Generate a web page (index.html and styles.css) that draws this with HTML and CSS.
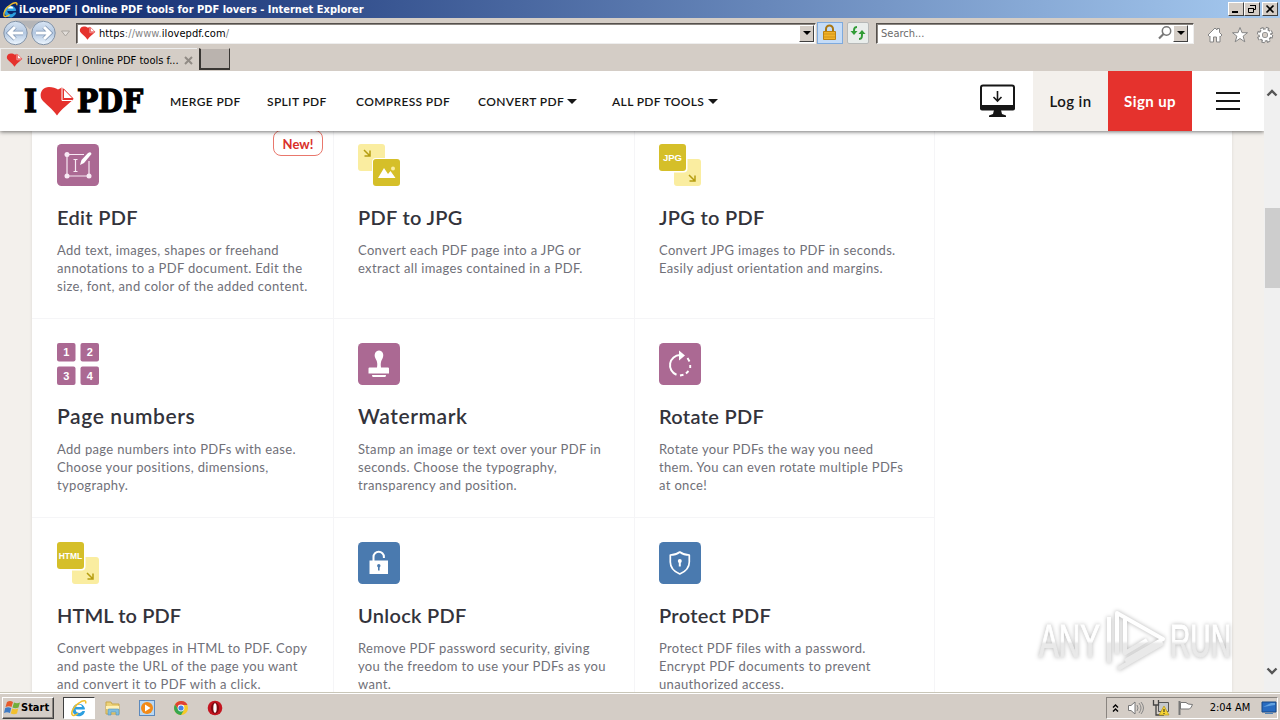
FILE: index.html
```html
<!DOCTYPE html>
<html lang="en">

<head>
  <meta charset="UTF-8">
  <meta name="viewport" content="width=device-width, initial-scale=1.0">
  <title>iLovePDF | Online PDF tools for PDF lovers</title>
  <link rel="stylesheet" href="styles.css">
</head>

<body>
  <!-- Shared shapes -->
  <svg class="defs" width="0" height="0">
    <defs>
      <symbol id="heart" viewBox="0 0 34 30">
        <path fill="#e5322d" d="M17 29.500C13 23 5 18 1.500 13C-1 8 2 1 9 1c4 0 6.500 1 9 2.500l4-2L33.500 13C29 18 21 23 17 29.500z" />
        <path fill="#fff" stroke="#e5322d" stroke-width="1" d="M23.500 2.800v9.700h9.500z" />
        <path fill="none" stroke="#fff" d="M22 2v12.500h10" />
      </symbol>
      <symbol id="ie" viewBox="0 0 18 18">
        <path d="M14.500 10.500H5.500a3.800 3.800 0 0 0 7 1.600h2.500A6.300 6.300 0 1 1 15 10z" fill="#2d9fe0" />
        <path d="M6 8h6.200a3.200 3.200 0 0 0-6.200 0z" fill="#fff" />
        <path d="M15.500 4.500C17 1 13 1 9 4 4 7 1 13 2 15.500c.8 2 4 .5 6-1" fill="none" stroke="#f1be2c" stroke-width="1.500" />
      </symbol>
      <symbol id="arrow" viewBox="0 0 8 8">
        <path d="M1 1l5.500 5.500M7 1.500V7H1.500" fill="none" stroke="#b59d10" stroke-width="1.500" />
      </symbol>
    </defs>
  </svg>

  <!-- Browser window -->
  <div class="titlebar">
    <svg width="17" height="17"><use href="#ie" /></svg>
    <span class="window-title">iLovePDF | Online PDF tools for PDF lovers - Internet Explorer</span>
    <div class="window-buttons">
      <span class="win-btn"><svg width="12" height="10"><path d="M2 8h6" stroke="#000" stroke-width="2" /></svg></span>
      <span class="win-btn"><svg width="12" height="10"><path d="M4.500 1.500h5v4h-2M4 1.500h6M2.500 4.500h5v4h-5zM2 4.500h6" fill="none" stroke="#000" /></svg></span>
      <span class="win-btn close-btn"><svg width="12" height="10"><path d="M2.500 1.500l7 7M9.500 1.500l-7 7" stroke="#000" stroke-width="1.700" /></svg></span>
    </div>
  </div>

  <div class="toolbar">
    <svg class="nav-buttons" width="76" height="30" viewBox="0 0 76 30">
      <defs>
        <linearGradient id="glass" x1="0" y1="0" x2="0" y2="1">
          <stop offset="0" stop-color="#d8e5f4" />
          <stop offset=".5" stop-color="#b3c7e0" />
          <stop offset="1" stop-color="#eef7ff" />
        </linearGradient>
      </defs>
      <path d="M15 2.500h29q-8 3-14 9-6-6-15-9z" fill="#b5b5b7" />
      <g fill="url(#glass)" stroke="#8292a6">
        <circle cx="15.500" cy="15" r="11.700" />
        <circle cx="43.500" cy="15" r="11.700" />
      </g>
      <g fill="none" stroke="#7d94b2" stroke-width="4.500">
        <path d="M23 15H10M15 9l-6 6 6 6M36 15h13M44 9l6 6-6 6" />
      </g>
      <g fill="none" stroke="#fff" stroke-width="3">
        <path d="M23 15H10M15 9l-6 6 6 6M36 15h13M44 9l6 6-6 6" />
      </g>
      <path d="M61.500 13h8l-4 5z" fill="#e2deda" stroke="#aaa59f" />
    </svg>
    <div class="field address">
      <svg width="17" height="14"><use href="#heart" /></svg>
      <span class="url"><span>https</span><i>://www.</i><span>ilovepdf.com</span><i>/</i></span>
      <span class="drop-btn"></span>
    </div>
    <span class="tool-btn lock">
      <svg width="16" height="18" viewBox="0 0 16 18">
        <path d="M4 8V5a3.500 3.500 0 0 1 7 0v3" fill="none" stroke="#a97713" stroke-width="2" />
        <path d="M1.500 7.500h12v8h-12z" fill="#f2b32a" stroke="#bc8213" />
        <path d="M2 10h11M2 13h11" stroke="#cf941c" />
      </svg>
    </span>
    <span class="tool-btn refresh">
      <svg width="16" height="14" viewBox="0 0 16 14">
        <path d="M7 1C4 1 4 3 4 6M9 13c3 0 3-2 3-5" fill="none" stroke="#319c36" stroke-width="2" />
        <path d="M.5 5h7L4 9zM8.500 8h7L12 4z" fill="#319c36" />
      </svg>
    </span>
    <div class="field search">
      <span>Search...</span>
      <svg width="16" height="16" viewBox="0 0 16 16">
        <circle cx="9.500" cy="6" r="4.200" fill="none" stroke="#777" stroke-width="1.500" />
        <path d="M6.500 9L2 13.500" stroke="#777" stroke-width="2.200" />
      </svg>
      <span class="drop-btn"></span>
    </div>
    <div class="corner-icons">
      <svg width="18" height="18" viewBox="0 0 18 18"><path d="M2 9l7-7 2 2V2.500h2.500V6.500L16 9l-1.500 1.500-.5-.5v6h-3.500v-5h-3v5H4v-6l-.5.500z" fill="#fff" stroke="#858585" /></svg>
      <svg width="18" height="18" viewBox="0 0 18 18"><path d="M9 1.500l2 5.200h5.500l-4.400 3.500 1.700 5.600L9 12.500l-4.800 3.300 1.700-5.600L1.500 6.700H7z" fill="#fff" stroke="#858585" /></svg>
      <svg width="18" height="18" viewBox="0 0 18 18">
        <circle cx="9" cy="9" r="6.300" fill="none" stroke="#858585" stroke-width="3.800" stroke-dasharray="2.900 2.050" />
        <circle cx="9" cy="9" r="4.500" fill="none" stroke="#858585" stroke-width="4.500" />
        <circle cx="9" cy="9" r="6" fill="none" stroke="#fff" stroke-width="2.200" stroke-dasharray="2 2.710" />
        <circle cx="9" cy="9" r="4.200" fill="none" stroke="#fff" stroke-width="2.400" />
      </svg>
    </div>
  </div>

  <div class="tabs">
    <div class="tab">
      <svg width="17" height="14"><use href="#heart" /></svg>
      <span>iLovePDF | Online PDF tools f...</span>
      <svg class="tab-close" width="9" height="9"><path d="M1 1l7 7M8 1L1 8" stroke="#918b85" stroke-width="2" /></svg>
    </div>
    <div class="new-tab"></div>
  </div>

  <!-- Page -->
  <div class="viewport">
    <div class="page">
      <header>
        <div class="logo">
          <svg width="122" height="32" viewBox="0 0 122 32">
            <text class="logo-text" x="0" y="27" textLength="13" lengthAdjust="spacingAndGlyphs">I</text>
            <use href="#heart" x="16" y="1" width="34" height="30" />
            <text class="logo-text" x="53" y="27" textLength="66" lengthAdjust="spacingAndGlyphs">PDF</text>
          </svg>
        </div>
        <nav>
          <a class="merge">MERGE PDF</a>
          <a class="split">SPLIT PDF</a>
          <a class="compress">COMPRESS PDF</a>
          <a class="convert">CONVERT PDF <b class="caret"></b></a>
          <a class="all">ALL PDF TOOLS <b class="caret"></b></a>
        </nav>
        <svg class="desktop" width="36" height="34" viewBox="0 0 36 34">
          <rect x="1" y="1.500" width="33" height="23.500" rx="2" fill="#fff" stroke="#161616" stroke-width="2" />
          <path d="M0 21h35v3.500q0 2-2 2H2q-2 0-2-2z" fill="#161616" />
          <path d="M14 26h7l1 4 4 1.500V33H9v-1.500l4-1.500z" fill="#161616" />
          <path d="M17.500 7v10M13.500 13l4 4 4-4" fill="none" stroke="#161616" stroke-width="1.600" />
        </svg>
        <a class="login">Log in</a>
        <a class="signup">Sign up</a>
        <div class="burger"><i></i><i></i><i></i></div>
      </header>

      <main>
        <div class="tools">
          <div class="tool">
            <span class="badge">New!</span>
            <svg class="icon" viewBox="0 0 42 42">
              <rect width="42" height="42" rx="4.500" fill="#ab6993" />
              <g stroke="#f8e9f4" stroke-width="1.200" fill="none">
                <path d="M10 10.500h17M10 10.500v21.500h22V17M18.500 16v11M16.500 15.500h4M16.500 27.500h4" />
              </g>
              <g fill="#f8e9f4"><circle cx="10" cy="10.500" r="2.500" /><circle cx="10" cy="32" r="2.500" /><circle cx="32" cy="32" r="2.500" /></g>
              <path d="M23 21l1.500-5L31 9q3-2 3.500 1L27 19z" fill="#fff" />
            </svg>
            <h3>Edit PDF</h3>
            <p>Add text, images, shapes or freehand<br>annotations to a PDF document. Edit the<br>size, font, and color of the added content.</p>
          </div>
          <div class="tool">
            <svg class="icon" viewBox="0 0 42 42">
              <rect width="27" height="27" rx="3" fill="#faeda0" />
              <use href="#arrow" x="5" y="5" width="8" height="8" />
              <rect x="14" y="14" width="29" height="29" rx="4" fill="#fff" />
              <rect x="15" y="15" width="27" height="27" rx="3" fill="#d5bf29" />
              <path d="M20 34l6-10 4 6 2.500-3 5 7z" fill="#fff" /><circle cx="35" cy="24.500" r="2" fill="#faeda0" />
            </svg>
            <h3>PDF to JPG</h3>
            <p>Convert each PDF page into a JPG or<br>extract all images contained in a PDF.</p>
          </div>
          <div class="tool">
            <svg class="icon" viewBox="0 0 42 42">
              <rect x="15" y="15" width="27" height="27" rx="3" fill="#faeda0" />
              <use href="#arrow" x="29" y="30" width="8" height="8" />
              <rect width="28.500" height="28.500" rx="4" fill="#fff" />
              <rect width="27" height="27" rx="3" fill="#d5bf29" />
              <text class="icon-text" x="13.500" y="17" textLength="19" lengthAdjust="spacingAndGlyphs">JPG</text>
            </svg>
            <h3>JPG to PDF</h3>
            <p>Convert JPG images to PDF in seconds.<br>Easily adjust orientation and margins.</p>
          </div>

          <div class="tool">
            <svg class="icon" viewBox="0 0 42 42">
              <g fill="#ab6993">
                <rect width="18.500" height="18.500" rx="2" /><rect x="23.500" width="18.500" height="18.500" rx="2" />
                <rect y="23.500" width="18.500" height="18.500" rx="2" /><rect x="23.500" y="23.500" width="18.500" height="18.500" rx="2" />
              </g>
              <g class="icon-number">
                <text x="9.200" y="13.200">1</text><text x="32.800" y="13.200">2</text>
                <text x="9.200" y="37">3</text><text x="32.800" y="37">4</text>
              </g>
            </svg>
            <h3 class="wide">Page numbers</h3>
            <p>Add page numbers into PDFs with ease.<br>Choose your positions, dimensions,<br>typography.</p>
          </div>
          <div class="tool">
            <svg class="icon" viewBox="0 0 42 42">
              <rect width="42" height="42" rx="4.500" fill="#ab6993" />
              <path d="M19 24.500q1-5-1.500-9c-2-4 0-8 3.500-8s5.500 4 3.500 8q-2.500 4-1.500 9h7q1 0 1 1v5H10.500v-5q0-1 1-1zM14 32h14q0 2-1 2H15q-1 0-1-2z" fill="#fff" />
            </svg>
            <h3 class="wide">Watermark</h3>
            <p>Stamp an image or text over your PDF in<br>seconds. Choose the typography,<br>transparency and position.</p>
          </div>
          <div class="tool">
            <svg class="icon" viewBox="0 0 42 42">
              <rect width="42" height="42" rx="4.500" fill="#ab6993" />
              <path d="M21 12a10.200 10.200 0 0 0-3.500 19.700" fill="none" stroke="#fff" stroke-width="2" />
              <path d="M20 7.500l6 5-6 5z" fill="#fff" />
              <path d="M28.500 15l2 3.500M31.200 22v3M29.500 28l-2.500 2.500M24.500 31.800l-3.500.7" fill="none" stroke="#fff" stroke-width="1.900" />
            </svg>
            <h3>Rotate PDF</h3>
            <p>Rotate your PDFs the way you need<br>them. You can even rotate multiple PDFs<br>at once!</p>
          </div>

          <div class="tool">
            <svg class="icon" viewBox="0 0 42 42">
              <rect x="15" y="15" width="27" height="27" rx="3" fill="#faeda0" />
              <use href="#arrow" x="29" y="30" width="8" height="8" />
              <rect width="28.500" height="28.500" rx="4" fill="#fff" />
              <rect width="27" height="27" rx="3" fill="#d5bf29" />
              <text class="icon-text html" x="13.500" y="16.500" textLength="23.500" lengthAdjust="spacingAndGlyphs">HTML</text>
            </svg>
            <h3 class="tight">HTML to PDF</h3>
            <p>Convert webpages in HTML to PDF. Copy<br>and paste the URL of the page you want<br>and convert it to PDF with a click.</p>
          </div>
          <div class="tool">
            <svg class="icon" viewBox="0 0 42 42">
              <rect width="42" height="42" rx="4.500" fill="#4a7aaf" />
              <path d="M15.500 19v-4a5.200 5.200 0 0 1 10.400 0v1" fill="none" stroke="#fff" stroke-width="2" />
              <path d="M11.500 18.500h18.500V32H11.500z" fill="#fff" />
              <circle cx="20.800" cy="23.800" r="1.700" fill="#4a7aaf" /><path d="M20 24h1.600v4.500H20z" fill="#4a7aaf" />
            </svg>
            <h3>Unlock PDF</h3>
            <p>Remove PDF password security, giving<br>you the freedom to use your PDFs as you<br>want.</p>
          </div>
          <div class="tool">
            <svg class="icon" viewBox="0 0 42 42">
              <rect width="42" height="42" rx="4.500" fill="#4a7aaf" />
              <path d="M20.800 10q4 3 9.500 3v7q0 8-9.500 12-9.500-4-9.500-12v-7q5.500 0 9.500-3z" fill="none" stroke="#fff" stroke-width="1.700" stroke-linejoin="round" />
              <circle cx="20.800" cy="19" r="2" fill="#fff" /><path d="M19.800 19h2v5.500h-2z" fill="#fff" />
            </svg>
            <h3>Protect PDF</h3>
            <p>Protect PDF files with a password.<br>Encrypt PDF documents to prevent<br>unauthorized access.</p>
          </div>
        </div>
      </main>
    </div>

    <div class="scrollbar">
      <svg width="16" height="16"><path d="M3.500 10.500l4.500-4.500 4.500 4.500" fill="none" stroke="#555" stroke-width="2.400" /></svg>
      <div class="thumb"></div>
      <svg class="down" width="16" height="16"><path d="M3.500 5.500L8 10l4.500-4.500" fill="none" stroke="#555" stroke-width="2.400" /></svg>
    </div>

    <svg class="watermark" width="200" height="70" viewBox="0 0 200 70">
      <defs>
        <linearGradient id="fade" x1="0" y1="0" x2="0" y2="1">
          <stop offset=".5" stop-color="#fff" />
          <stop offset=".55" stop-color="#e9e9e9" />
        </linearGradient>
      </defs>
      <text x="3" y="51" textLength="61" lengthAdjust="spacingAndGlyphs">ANY</text>
      <text x="134" y="51" textLength="61" lengthAdjust="spacingAndGlyphs">RUN</text>
      <g fill="none" stroke="url(#fade)" stroke-width="4" stroke-linejoin="round">
        <path d="M81 48V7l46 26-38 22M89 13v34l22-13M73 11v46M82 63l45-26" />
      </g>
    </svg>
  </div>

  <footer class="taskbar">
    <div class="start">
      <svg width="17" height="16" viewBox="0 0 17 16">
        <path d="M3 2q3-2 6 0L7.500 7Q5 5.500 1.500 7z" fill="#e65a2b" /><path d="M10 2.500q3 1.500 6 0L14.500 7.500q-3 1.500-6 0z" fill="#71ae3a" />
        <path d="M1.200 8Q4 6.500 7.200 8L6 13Q3 11.500 0 13z" fill="#3f7bc5" /><path d="M8.200 8.500q3 1.500 6 0L13 13.500q-3 1.500-6.200 0z" fill="#f2c02e" />
      </svg>
      <span>Start</span>
    </div>
    <div class="task active"><svg width="18" height="18"><use href="#ie" /></svg></div>
    <div class="task">
      <svg width="18" height="18" viewBox="0 0 18 18"><path d="M2 3h5l1 2h7v10H2z" fill="#edd278" stroke="#c8a74b" /><path d="M2 7h13v3H2z" fill="#fff2b8" /><path d="M4 16v-5q0-1 1-1h9q1 0 1 1v5h-3v-3H7v3z" fill="#80bedf" stroke="#5192bb" stroke-width=".6" /></svg>
    </div>
    <div class="task">
      <svg width="18" height="18" viewBox="0 0 18 18"><rect x="1.500" y="1.500" width="15" height="15" fill="#b9d8f3" stroke="#5c89bc" /><circle cx="9" cy="9" r="6" fill="#f28a17" /><path d="M7 5.500v7l5.500-3.500z" fill="#fff" /></svg>
    </div>
    <div class="task">
      <svg width="16" height="16" viewBox="0 0 16 16"><circle cx="8" cy="8" r="7" fill="#f6c928" /><path d="M2 4.500a7 7 0 0 1 12.500.5H8L5 9z" fill="#df4133" /><path d="M2 4.500A7 7 0 0 0 8 15l3-5-6-1z" fill="#36a64f" /><circle cx="8" cy="8" r="3.400" fill="#fff" /><circle cx="8" cy="8" r="2.600" fill="#4383e6" /></svg>
    </div>
    <div class="task">
      <svg width="16" height="16" viewBox="0 0 16 16"><circle cx="8" cy="8" r="7.300" fill="#c41520" /><ellipse cx="8" cy="8" rx="4" ry="5.800" fill="#7c0910" /><ellipse cx="8" cy="8" rx="1.700" ry="4.800" fill="#fff" /></svg>
    </div>
    <div class="tray">
      <svg class="chevrons" width="8" height="10"><path d="M1 4.500L3.500 2 6 4.500M1 8.500L3.500 6 6 8.500" fill="none" stroke="#000" stroke-width="1.400" /></svg>
      <svg width="18" height="16" viewBox="0 0 18 16"><path d="M1.500 5.500H4L8 2v12l-4-3.500H1.500z" fill="#fff" stroke="#777" /><path d="M10 5q2 3 0 6M12 3q4 5 0 10M14 2q5 6 0 12" fill="none" stroke="#888" /></svg>
      <svg width="18" height="17" viewBox="0 0 18 17"><path d="M6.500 3.500h10v9h-10z" fill="#c5c8cc" stroke="#555" /><path d="M1.500 1v5h5V1M4 6v10h8" fill="none" stroke="#444" stroke-width="1.300" /><path d="M12 7l5 9H7z" fill="#f7d435" stroke="#b6961b" stroke-width=".7" /><path d="M12 10v3M12 14v1" stroke="#222" /></svg>
      <svg width="18" height="16" viewBox="0 0 18 16"><path d="M2.500 1v14" stroke="#777" stroke-width="2" /><path d="M3.500 2.500H9q1 2 6.500 2-1 3-3 4.500H3.500z" fill="#fff" stroke="#777" /></svg>
      <span class="clock">2:04 AM</span>
      <svg width="16" height="14" viewBox="0 0 16 14"><path d="M1 1h14v10H1z" fill="#286bc0" stroke="#174985" /><path d="M2 6l8-4h4v2z" fill="#62a2e0" /><path d="M4 12h8v1H4z" fill="#4f82b5" /></svg>
    </div>
  </footer>
</body>

</html>
```
FILE: styles.css
```css
* {
  box-sizing: border-box;
}

body {
  margin: 0;
  width: 1280px;
  height: 720px;
  overflow: hidden;
  display: flex;
  flex-direction: column;
  background: #d4cdc6;
  color: #000;
  font-family: "DejaVu Sans Condensed", "DejaVu Sans", sans-serif;
  font-stretch: condensed;
  font-size: 11px;
}

svg {
  display: block;
  flex: none;
}

.defs {
  position: absolute;
}

/* Window title */
.titlebar {
  height: 18px;
  flex: none;
  display: flex;
  align-items: center;
  padding: 0 2px;
  background: linear-gradient(90deg, #0a246a, #a6caf0);
  color: #fff;
}

.window-title {
  flex: 1;
  font-weight: bold;
}

.window-buttons {
  display: flex;
}

.win-btn {
  width: 16px;
  height: 14px;
  display: flex;
  align-items: center;
  justify-content: center;
  background: #d4cdc6;
  border: 1px solid;
  border-color: #fff #404040 #404040 #fff;
}

.close-btn {
  margin-left: 2px;
}

/* Address row */
.toolbar {
  height: 30px;
  flex: none;
  display: flex;
  align-items: center;
}

.field {
  height: 21px;
  display: flex;
  align-items: center;
  background: #fff;
  border: 1px solid;
  border-color: #55504c #eee #eee #55504c;
  box-shadow: inset 1px 1px #8a8580;
}

.address {
  width: 740px;
  padding: 0 1px 0 2px;
}

.url {
  flex: 1;
  margin-left: 3px;
  display: flex;
  letter-spacing: 0.07px;
}

.url i {
  font-style: normal;
  color: #858585;
}

.drop-btn {
  width: 15px;
  height: 17px;
  display: flex;
  align-items: center;
  justify-content: center;
  background: #d4cdc6;
  border: 1px solid;
  border-color: #fff #404040 #404040 #fff;
}

.drop-btn::after {
  content: "";
  border: 4px solid transparent;
  border-top-color: #000;
  border-bottom: 0;
}

.tool-btn {
  height: 22px;
  display: flex;
  align-items: center;
  justify-content: center;
}

.lock {
  width: 26px;
  margin-left: 1px;
  background: #c5dcf7;
  border: 1px solid #7eaadd;
}

.refresh {
  width: 22px;
  margin-left: 4px;
  background: #e9edeb;
  border: 1px solid #b7b9b8;
  border-radius: 2px;
}

.search {
  width: 318px;
  margin-left: 7px;
  padding: 0 5px 0 4px;
  color: #6b6b6b;
}

.search span:first-child {
  flex: 1;
}

.corner-icons {
  display: flex;
  gap: 7px;
  margin-left: 12px;
  padding-top: 4px;
}

/* Tabs */
.tabs {
  height: 23px;
  flex: none;
  display: flex;
}

.tab {
  width: 197px;
  display: flex;
  align-items: center;
  padding-left: 5px;
  border-left: 1px solid #eee;
  border-top: 1px solid #eee;
}

.tab span {
  flex: 1;
  margin-left: 4px;
  white-space: nowrap;
}

.tab-close {
  margin-right: 4px;
}

.new-tab {
  width: 31px;
  height: 22px;
  margin-left: 2px;
  background: #bab3ae;
  border: 2px solid;
  border-width: 1px 1px 2px 2px;
  border-color: #d4cdc6 #393633 #393633;
}

/* Page */
.viewport {
  position: relative;
  height: 621px;
  flex: none;
  display: flex;
  overflow: hidden;
}

.page {
  width: 1264px;
  overflow: hidden;
  background: #f3f0ec;
  font-family: Lato, sans-serif;
  font-stretch: normal;
}

header {
  position: relative;
  z-index: 1;
  height: 60px;
  display: flex;
  align-items: center;
  background: #fff;
  box-shadow: 0 1px 4px rgba(0, 0, 0, 0.55);
  color: #161616;
}

.logo {
  width: 146px;
  padding: 0 0 0 24px;
}

.logo svg {
  overflow: visible;
}

.logo-text {
  font: bold 31px "DejaVu Serif", serif;
  fill: #000;
  stroke: #000;
  stroke-width: 1.4px;
}

nav {
  width: 834px;
  display: flex;
  font-size: 12px;
  font-weight: 600;
  padding-left: 24px;
}

nav a {
  white-space: nowrap;
  letter-spacing: 0.35px;
}

.merge {
  width: 97px;
}

.split {
  width: 89px;
}

.compress {
  width: 122px;
}

.convert {
  width: 134px;
}

.caret {
  display: inline-block;
  border: 5px solid transparent;
  border-top-color: #161616;
  border-bottom: 0;
  vertical-align: 2px;
}

.login,
.signup {
  height: 60px;
  line-height: 61px;
  text-align: center;
  font-size: 15px;
  font-weight: 600;
  letter-spacing: 0.4px;
}

.login {
  width: 75px;
  margin-left: 17px;
  background: #f3f0ec;
}

.signup {
  width: 84px;
  background: #e5322d;
  color: #fff;
  font-weight: 700;
}

.burger {
  width: 24px;
  margin-left: 24px;
  display: flex;
  flex-direction: column;
  gap: 6px;
}

.burger i {
  height: 2px;
  background: #161616;
}

/* The list is scrolled, its first row starts below the header */
main {
  display: flow-root;
  width: 1200px;
  height: 561px;
  margin: 0 auto;
  background: #fff;
  box-shadow: 0 0 3px rgba(0, 0, 0, 0.1);
}

.tools {
  display: grid;
  grid-template-columns: 302px 301px 300px;
  grid-auto-rows: 199px;
  margin-top: -11px;
}

.tool {
  position: relative;
  padding: 24px 0 0 24px;
  border-right: 1px solid #f5f5f7;
  border-bottom: 1px solid #f5f5f7;
}

.tool:nth-child(3n + 1) {
  padding-left: 25px;
}

.icon {
  width: 42px;
  height: 42px;
}

.icon-text {
  fill: #fff;
  font: bold 9px "Liberation Sans", sans-serif;
  text-anchor: middle;
}

.html {
  font-size: 8.500px;
}

.icon-number {
  fill: #fff;
  font: bold 11px "Liberation Sans", sans-serif;
  text-anchor: middle;
}

h3 {
  margin: 18px 0 11px;
  font-size: 20px;
  line-height: 26px;
  font-weight: 600;
  letter-spacing: 0.3px;
  color: #33333b;
}

h3.wide {
  font-size: 21px;
  letter-spacing: 0.6px;
}

h3.tight {
  letter-spacing: 0.1px;
}

p {
  margin: 0;
  font-size: 13px;
  line-height: 18px;
  letter-spacing: 0.34px;
  color: #707078;
  white-space: nowrap;
}

.badge {
  position: absolute;
  top: 10px;
  right: 10px;
  width: 50px;
  height: 26px;
  border: 1px solid #e9776c;
  border-radius: 8px;
  color: #d92f2b;
  font-size: 13px;
  font-weight: 700;
  line-height: 26px;
  text-align: center;
}

.scrollbar {
  width: 16px;
  padding-top: 14px;
  display: flex;
  flex-direction: column;
  background: #f0f0f0;
}

.thumb {
  height: 80px;
  margin: 107px 0 0 1px;
  background: #cdcdcd;
}

.down {
  margin-top: auto;
  margin-bottom: 13px;
}

.watermark {
  position: absolute;
  left: 1036px;
  top: 535px;
  overflow: visible;
  filter: drop-shadow(0 0 2px rgba(0, 0, 0, 0.3));
}

.watermark text {
  font: 46px "Liberation Sans", sans-serif;
  fill: url(#fade);
  stroke: url(#fade);
}

/* Taskbar */
.taskbar {
  height: 28px;
  flex: none;
  display: flex;
  align-items: center;
  padding: 2px 2px 0;
  border-top: 1px solid #c9c6b8;
  box-shadow: inset 0 1px #fff;
}

.start {
  width: 52px;
  height: 22px;
  display: flex;
  align-items: center;
  padding-left: 1px;
  border: 1px solid;
  border-color: #fff #404040 #404040 #fff;
  box-shadow: inset -1px -1px #8a8580;
  font-weight: bold;
}

.task {
  width: 34px;
  height: 22px;
  display: flex;
  align-items: center;
  justify-content: center;
}

.active {
  width: 32px;
  margin: 0 1px 0 9px;
  background: #fff;
  border: 1px solid;
  border-color: #404040 #fff #fff #404040;
}

.tray {
  width: 172px;
  height: 22px;
  margin-left: auto;
  display: flex;
  align-items: center;
  gap: 7px;
  padding-left: 5px;
  border: 1px solid;
  border-color: #8a8580 #fff #fff #8a8580;
}

.clock {
  flex: 1;
  padding-left: 4px;
  text-align: center;
  white-space: nowrap;
}
```
